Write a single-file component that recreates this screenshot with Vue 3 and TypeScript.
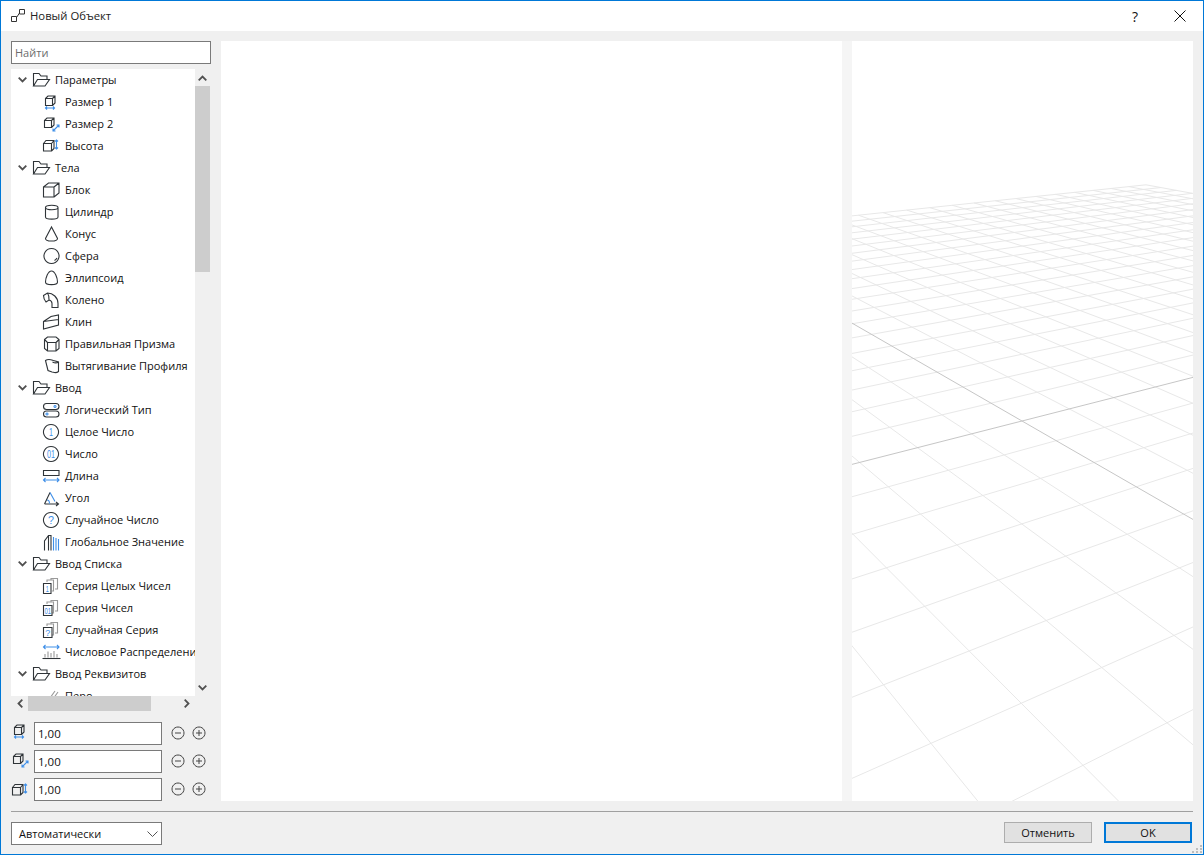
<script setup lang="ts">
interface Shape { d?: string; c?: string; t?: string; x?: number; y?: number; s?: number; w?: number }
const cube = 'M3.5 6.5h7v7h-7z M3.5 6.5l2.5-2.5h7v7l-2.5 2.5 M10.5 6.5L13 4'
const circle = 'M9 2.5a7.5 7.5 0 1 0 0.01 0z'
const icons: Record<string, Shape[]> = {
  size1: [{ d: cube }, { d: 'M3.5 16h9 M5 14.5L3.5 16 5 17.5 M11 14.5l1.5 1.5-1.5 1.5', c: 'b' }],
  size2: [{ d: 'M2.5 6.5h7v7h-7z M2.5 6.5L5 4h7v7l-2.5 2.5 M9.5 6.5L12 4' }, { d: 'M11 17l6-6 M11 14.5V17h2.5 M14.5 11H17v2.5', c: 'b' }],
  height: [{ d: 'M1.5 7.5h8v7.5h-8z M1.5 7.5L4 4.5h8v8L9.5 15 M9.5 7.5l2.5-3' }, { d: 'M14.5 4v9 M13 5.5l1.5-1.5L16 5.5 M13 11.5l1.5 1.5 1.5-1.5', c: 'b' }],
  block: [{ d: 'M1.5 7h10.5v10H1.5z M1.5 7L6.5 3h10.5v10L12 17 M12 7l5-4' }],
  cylinder: [{ d: 'M3.5 5.5v9.5c0 2.8 12.5 2.8 12.5 0V5.5 M3.5 5.5c0-3 12.5-3 12.5 0s-12.5 3-12.5 0z' }],
  cone: [{ d: 'M9.5 3L3.5 14.5c0 3.4 12 3.4 12 0L9.5 3z' }],
  sphere: [{ d: 'M9.5 2.5a7.5 7.5 0 1 0 0.01 0z' }, { d: 'M12.5 14.5a5.5 5.5 0 0 0 2.5-2.5' }],
  ellipsoid: [{ d: 'M9.5 3c-3.5 0-6 7-6 11 0 3.5 12 3.5 12 0 0-4-2.5-11-6-11z' }],
  elbow: [{ d: 'M1.500 5.500L5.500 3C11 3 16 7.500 16 13.500V17.500H10V13.500C10 11.500 9 10.500 7 10L4 12C2.500 10 1.500 8 1.500 5.500z M5.500 3C6.800 5 7.300 7.500 7 10' }],
  wedge: [{ d: 'M1.500 9.500L9 4.500 16.500 3V13L1.500 17z M1.500 9.500L16.500 7.500' }],
  prism: [{ d: 'M2.500 5.500L5.500 3h8.500l3 2.500v9L14 17H5.500l-3-2.500z M5.500 8.500h8.500 M2.500 5.500l3 3 M17 5.500l-3 3 M5.500 8.500V17 M14 8.500V17' }],
  extrude: [{ d: 'M3.500 4.500c3-2 5-1 8 0l5 1.500v9.500c-2.500 2-4 1-6.500.5l-4-1.500z M3.500 4.500l2.500 10 M16.500 6c-2 1.500-4 1-6 0' }],
  bool: [{ d: 'M4.500 3.500h9.500a3 3 0 0 1 0 6H4.500a3 3 0 0 1 0-6z M4.500 11h9.500a3 3 0 0 1 0 6H4.500a3 3 0 0 1 0-6z' }, { d: 'M13 5.500a1 1 0 1 0 .01 0z M5 13a1 1 0 1 0 .01 0z', c: 'b' }],
  integer: [{ d: circle }, { t: '1', x: 9, y: 14, s: 11, w: 4 }],
  number: [{ d: circle }, { t: '01', x: 9, y: 14, s: 11, w: 8 }],
  length: [{ d: 'M1.500 4.500h15.500v5H1.500z' }, { d: 'M1.500 14h15.500 M3.500 12l-2 2 2 2 M15 12l2 2-2 2', c: 'b' }],
  angle: [{ d: 'M2.500 16H16 M14 14l2.500 2-2.500 2 M2.500 16L8 4.500' }, { d: 'M8 4.500l5 9 M5 12c1.500 0 2.500 1.500 2.500 3.500', c: 'b' }],
  random: [{ d: circle }, { t: '?', x: 9, y: 14, s: 11, w: 6 }],
  global: [{ d: 'M2.500 18.500V9l4-5.500h2.500V18.500 M6.500 3.500V18.500' }, { d: 'M11.500 5v13.500 M14 6v12.500 M16.500 7v11.500', c: 'b' }],
  seriesInt: [{ d: 'M5 6V4h6.500v11h-1.500 M9 4V2.500h6.500V13H13', c: 'g' }, { d: 'M1.500 7.500h7.500v10H1.500z' }, { t: '1', x: 5.200, y: 15.500, s: 9, w: 3 }],
  seriesNum: [{ d: 'M5 6V4h6.500v11h-1.500 M9 4V2.500h6.500V13H13', c: 'g' }, { d: 'M1.500 7.500h8.500v10H1.500z' }, { t: '01', x: 5.700, y: 15.500, s: 9, w: 6.500 }],
  seriesRnd: [{ d: 'M5 6V4h6.500v11h-1.500 M9 4V2.500h6.500V13H13', c: 'g' }, { d: 'M1.500 7.500h8.500v10H1.500z' }, { t: '?', x: 5.700, y: 15.800, s: 9, w: 5 }],
  distrib: [{ d: 'M1.500 5h15.500 M3.500 3l-2 2 2 2 M15 3l2 2-2 2', c: 'b' }, { d: 'M3 15.500V12 M6 15.500V9.500 M9 15.500V11 M12 15.500V9 M15 15.500V12', c: 'g' }, { d: 'M.5 16.500h18' }],
  pen: [{ d: 'M8 12L13 5 M11 13l5-7', c: 'g' }]
}
interface Row { label: string; icon?: string }
const rows: Row[] = [
  { label: 'Параметры' },
  { label: 'Размер 1', icon: 'size1' },
  { label: 'Размер 2', icon: 'size2' },
  { label: 'Высота', icon: 'height' },
  { label: 'Тела' },
  { label: 'Блок', icon: 'block' },
  { label: 'Цилиндр', icon: 'cylinder' },
  { label: 'Конус', icon: 'cone' },
  { label: 'Сфера', icon: 'sphere' },
  { label: 'Эллипсоид', icon: 'ellipsoid' },
  { label: 'Колено', icon: 'elbow' },
  { label: 'Клин', icon: 'wedge' },
  { label: 'Правильная Призма', icon: 'prism' },
  { label: 'Вытягивание Профиля', icon: 'extrude' },
  { label: 'Ввод' },
  { label: 'Логический Тип', icon: 'bool' },
  { label: 'Целое Число', icon: 'integer' },
  { label: 'Число', icon: 'number' },
  { label: 'Длина', icon: 'length' },
  { label: 'Угол', icon: 'angle' },
  { label: 'Случайное Число', icon: 'random' },
  { label: 'Глобальное Значение', icon: 'global' },
  { label: 'Ввод Списка' },
  { label: 'Серия Целых Чисел', icon: 'seriesInt' },
  { label: 'Серия Чисел', icon: 'seriesNum' },
  { label: 'Случайная Серия', icon: 'seriesRnd' },
  { label: 'Числовое Распределение', icon: 'distrib' },
  { label: 'Ввод Реквизитов' },
  { label: 'Перо', icon: 'pen' }
]
const fields = ['size1', 'size2', 'height']

// ground-plane grid: perspective projection onto the preview canvas
const k = 0.0327
const m = 0.0492
const O = [1022 - 852, 421 - 41]
const A = [2515 - 852, 40 - 41]
const B = [362 - 852, 41 - 41]
function project(u: number, v: number): [number, number] {
  const w = 1 + k * u + m * v
  return [
    (O[0] + u * k * A[0] + v * m * B[0]) / w,
    (O[1] + u * k * A[1] + v * m * B[1]) / w
  ]
}
interface GridLine { x1: number; y1: number; x2: number; y2: number; axis: boolean }
const N = 20
const minW = 0.06
const gridLines: GridLine[] = []
function add(p: [number, number], q: [number, number], axis: boolean) {
  gridLines.push({ x1: p[0], y1: p[1], x2: q[0], y2: q[1], axis })
}
for (let i = -N; i <= N; i++) {
  const vMin = Math.max(-N, (minW - 1 - k * i) / m)
  if (vMin < N) add(project(i, vMin), project(i, N), i === 0)
  const uMin = Math.max(-N, (minW - 1 - m * i) / k)
  if (uMin < N) add(project(uMin, i), project(N, i), i === 0)
}
gridLines.sort((a, b) => Number(a.axis) - Number(b.axis))
</script>

<template>
  <div class="window">
    <header class="titlebar">
      <svg class="app-icon" width="16" height="14" viewBox="0 0 16 14">
        <path d="M1.500 7.500h5v5h-5z M9.500 .5h5v4.500h-5z M6.500 8.500L9.500 4" />
      </svg>
      <span class="title">Новый Объект</span>
      <span class="help">?</span>
      <svg class="close" width="12" height="12" viewBox="0 0 12 12">
        <path d="M.5 .5l11 11 M11.500 .5l-11 11" />
      </svg>
    </header>

    <main class="main">
      <section class="side">
        <input class="search" placeholder="Найти" readonly />
        <div class="tree-box">
          <div class="tree-top">
            <div class="tree">
              <div v-for="r in rows" :key="r.label" class="row" :class="r.icon ? 'child' : 'parent'">
                <template v-if="!r.icon">
                  <svg class="chev" width="9" height="6" viewBox="0 0 9 6"><path d="M.7 .7L4.500 4.500 8.300 .7" /></svg>
                  <svg class="ic" viewBox="0 0 20 20"><path d="M1.500 16V3.500h5.500l2 2.500h6v3.500 M1.500 16h11.500l4.500-6.500H5.500z" /></svg>
                </template>
                <svg v-else class="ic" viewBox="0 0 20 20">
                  <template v-for="(p, i) in icons[r.icon]" :key="i">
                    <path v-if="p.d" :d="p.d" :class="p.c" />
                    <text v-else :x="p.x" :y="p.y" :font-size="p.s" :textLength="p.w" lengthAdjust="spacingAndGlyphs" class="digit">{{ p.t }}</text>
                  </template>
                </svg>
                <span class="label">{{ r.label }}</span>
              </div>
            </div>
            <div class="vscroll">
              <div class="arrow"><svg width="9" height="6" viewBox="0 0 9 6"><path d="M.7 5.300L4.500 1.500 8.300 5.300" /></svg></div>
              <div class="vthumb"></div>
              <div class="spacer"></div>
              <div class="arrow"><svg width="9" height="6" viewBox="0 0 9 6"><path d="M.7 .7L4.500 4.500 8.300 .7" /></svg></div>
            </div>
          </div>
          <div class="hscroll">
            <div class="arrow-h"><svg width="6" height="9" viewBox="0 0 6 9"><path d="M5.300 .7L1.500 4.500 5.300 8.300" /></svg></div>
            <div class="hthumb"></div>
            <div class="spacer"></div>
            <div class="arrow-h"><svg width="6" height="9" viewBox="0 0 6 9"><path d="M.7 .7L4.500 4.500 .7 8.300" /></svg></div>
          </div>
        </div>
        <div class="fields">
          <div v-for="f in fields" :key="f" class="field">
            <svg class="ic field-ic" viewBox="0 0 20 20">
              <path v-for="(p, i) in icons[f]" :key="i" :d="p.d" :class="p.c" />
            </svg>
            <input class="num" value="1,00" readonly />
            <svg class="step" width="14" height="14" viewBox="0 0 14 14"><path d="M7 1a6 6 0 1 0 .01 0z M4 7h6" /></svg>
            <svg class="step plus" width="14" height="14" viewBox="0 0 14 14"><path d="M7 1a6 6 0 1 0 .01 0z M4 7h6 M7 4v6" /></svg>
          </div>
        </div>
      </section>

      <section class="canvas"></section>
      <div class="gutter"></div>
      <section class="preview">
        <svg width="341" height="760" viewBox="0 0 341 760">
          <line
            v-for="(l, i) in gridLines"
            :key="i"
            :x1="l.x1" :y1="l.y1" :x2="l.x2" :y2="l.y2"
            :class="l.axis ? 'axis' : 'grid'"
          />
        </svg>
      </section>
    </main>

    <footer class="footer">
      <div class="rule"></div>
      <div class="actions">
        <div class="select">
          <span>Автоматически</span>
          <svg width="11" height="6" viewBox="0 0 11 6"><path d="M.5 .5l5 5 5-5" /></svg>
        </div>
        <div class="spacer"></div>
        <button class="btn" type="button">Отменить</button>
        <button class="btn primary" type="button">OK</button>
      </div>
    </footer>

    <svg class="grip" width="10" height="8" viewBox="0 0 10 8">
      <path d="M8 0h2v2H8z M4 3h2v2H4z M8 3h2v2H8z M0 6h2v2H0z M4 6h2v2H4z M8 6h2v2H8z" />
    </svg>
  </div>
</template>

<style>
html, body { margin: 0; background: #f0f0f0; }
</style>

<style scoped>
.window {
  position: relative;
  box-sizing: border-box;
  width: 1204px;
  height: 855px;
  display: flex;
  flex-direction: column;
  border: 1px solid #0078d7;
  background: #f0f0f0;
  font-family: "Open Sans", "Noto Sans", sans-serif;
  font-size: 11px;
  color: #111;
}
.titlebar {
  height: 30px;
  flex: none;
  display: flex;
  align-items: center;
  background: #fff;
  padding-left: 9px;
}
.app-icon path { fill: none; stroke: #333; stroke-width: 1; }
.title { margin: 0 0 2px 4px; font-size: 11.300px; color: #222; }
.help { margin-left: auto; margin-right: 36px; font-size: 14px; color: #111; }
.close { margin-right: 17px; }
.close path { fill: none; stroke: #111; stroke-width: 1; }

.main {
  flex: none;
  height: 770px;
  box-sizing: border-box;
  display: flex;
  padding: 10px 10px 0;
}
.side {
  width: 200px;
  flex: none;
  display: flex;
  flex-direction: column;
}
input {
  box-sizing: border-box;
  height: 23px;
  margin: 0;
  border: 1px solid #7a7a7a;
  background: #fff;
  font: inherit;
  color: #111;
  outline: none;
}
.search { width: 200px; padding: 0 3px; flex: none; }
.search::placeholder { color: #6d6d6d; opacity: 1; }

.tree-box { margin-top: 5px; height: 642px; display: flex; flex-direction: column; flex: none; }
.tree-top { display: flex; height: 627px; flex: none; }
.tree { width: 184px; background: #fff; overflow: hidden; flex: none; }
.row { height: 22px; display: flex; align-items: center; white-space: nowrap; }
.parent { padding-left: 7px; }
.child { padding-left: 31px; }
.chev { flex: none; }
.chev path { fill: none; stroke: #505050; stroke-width: 1.800; }
.ic { width: 20px; height: 20px; flex: none; }
.parent .ic { margin-left: 5px; margin-right: 3px; }
.child .ic { margin-right: 3px; }
.ic path { fill: none; stroke: #2f3438; stroke-width: 1.100; }
.ic path.b { stroke: #3f8fe8; }
.ic path.g { stroke: #9a9a9a; }
.digit { fill: #3f8fe8; text-anchor: middle; font-family: "Liberation Sans", sans-serif; }
.label { color: #111; margin-bottom: 2px; }

.vscroll { width: 15px; flex: none; display: flex; flex-direction: column; }
.arrow { height: 17px; flex: none; display: flex; align-items: center; justify-content: center; }
.arrow path, .arrow-h path { fill: none; stroke: #505050; stroke-width: 1.800; }
.vthumb { height: 186px; background: #cdcdcd; flex: none; }
.spacer { flex: 1; }
.hscroll { width: 184px; height: 15px; flex: none; display: flex; }
.arrow-h { width: 17px; flex: none; display: flex; align-items: center; justify-content: center; }
.hthumb { width: 123px; background: #cdcdcd; flex: none; }

.fields { margin-top: 11px; display: flex; flex-direction: column; gap: 5px; }
.field { height: 23px; display: flex; align-items: flex-start; }
.field-ic { margin-right: 3px; }
.field:nth-child(1) .field-ic { margin-top: -1px; }
.field:nth-child(2) .field-ic { margin-top: 0; }
.field:nth-child(3) .field-ic { margin-top: 2px; }
.num { width: 128px; padding: 0 3px; font-size: 11.500px; }
.step { margin: 4px 0 0 9px; flex: none; }
.step.plus { margin-left: 7px; }
.step path { fill: none; stroke: #444; stroke-width: 1; }

.canvas { width: 621px; margin-left: 10px; background: #fff; flex: none; }
.gutter { width: 10px; background: #f5f5f5; flex: none; }
.preview { width: 341px; background: #fff; flex: none; overflow: hidden; }
.preview svg { display: block; }
.grid { stroke: #e8e8e8; stroke-width: 1; }
.axis { stroke: #c6c6c6; stroke-width: 1; }

.footer { padding: 10px 10px 0; }
.rule { height: 1px; background: #a0a0a0; }
.actions { display: flex; margin-top: 10px; padding-right: 1px; }
.select {
  box-sizing: border-box;
  width: 151px;
  height: 23px;
  border: 1px solid #7a7a7a;
  background: #fff;
  display: flex;
  align-items: center;
  justify-content: space-between;
  padding: 0 3px 0 7px;
}
.select path { fill: none; stroke: #555; stroke-width: 1; }
.btn {
  box-sizing: border-box;
  width: 88px;
  height: 21px;
  padding: 0;
  border: 1px solid #adadad;
  background: #e1e1e1;
  font: inherit;
  color: #111;
}
.primary { margin-left: 12px; border: 2px solid #0078d7; }
.grip { position: absolute; right: 1px; bottom: 1px; }
.grip path { fill: #bdbdbd; }
</style>
